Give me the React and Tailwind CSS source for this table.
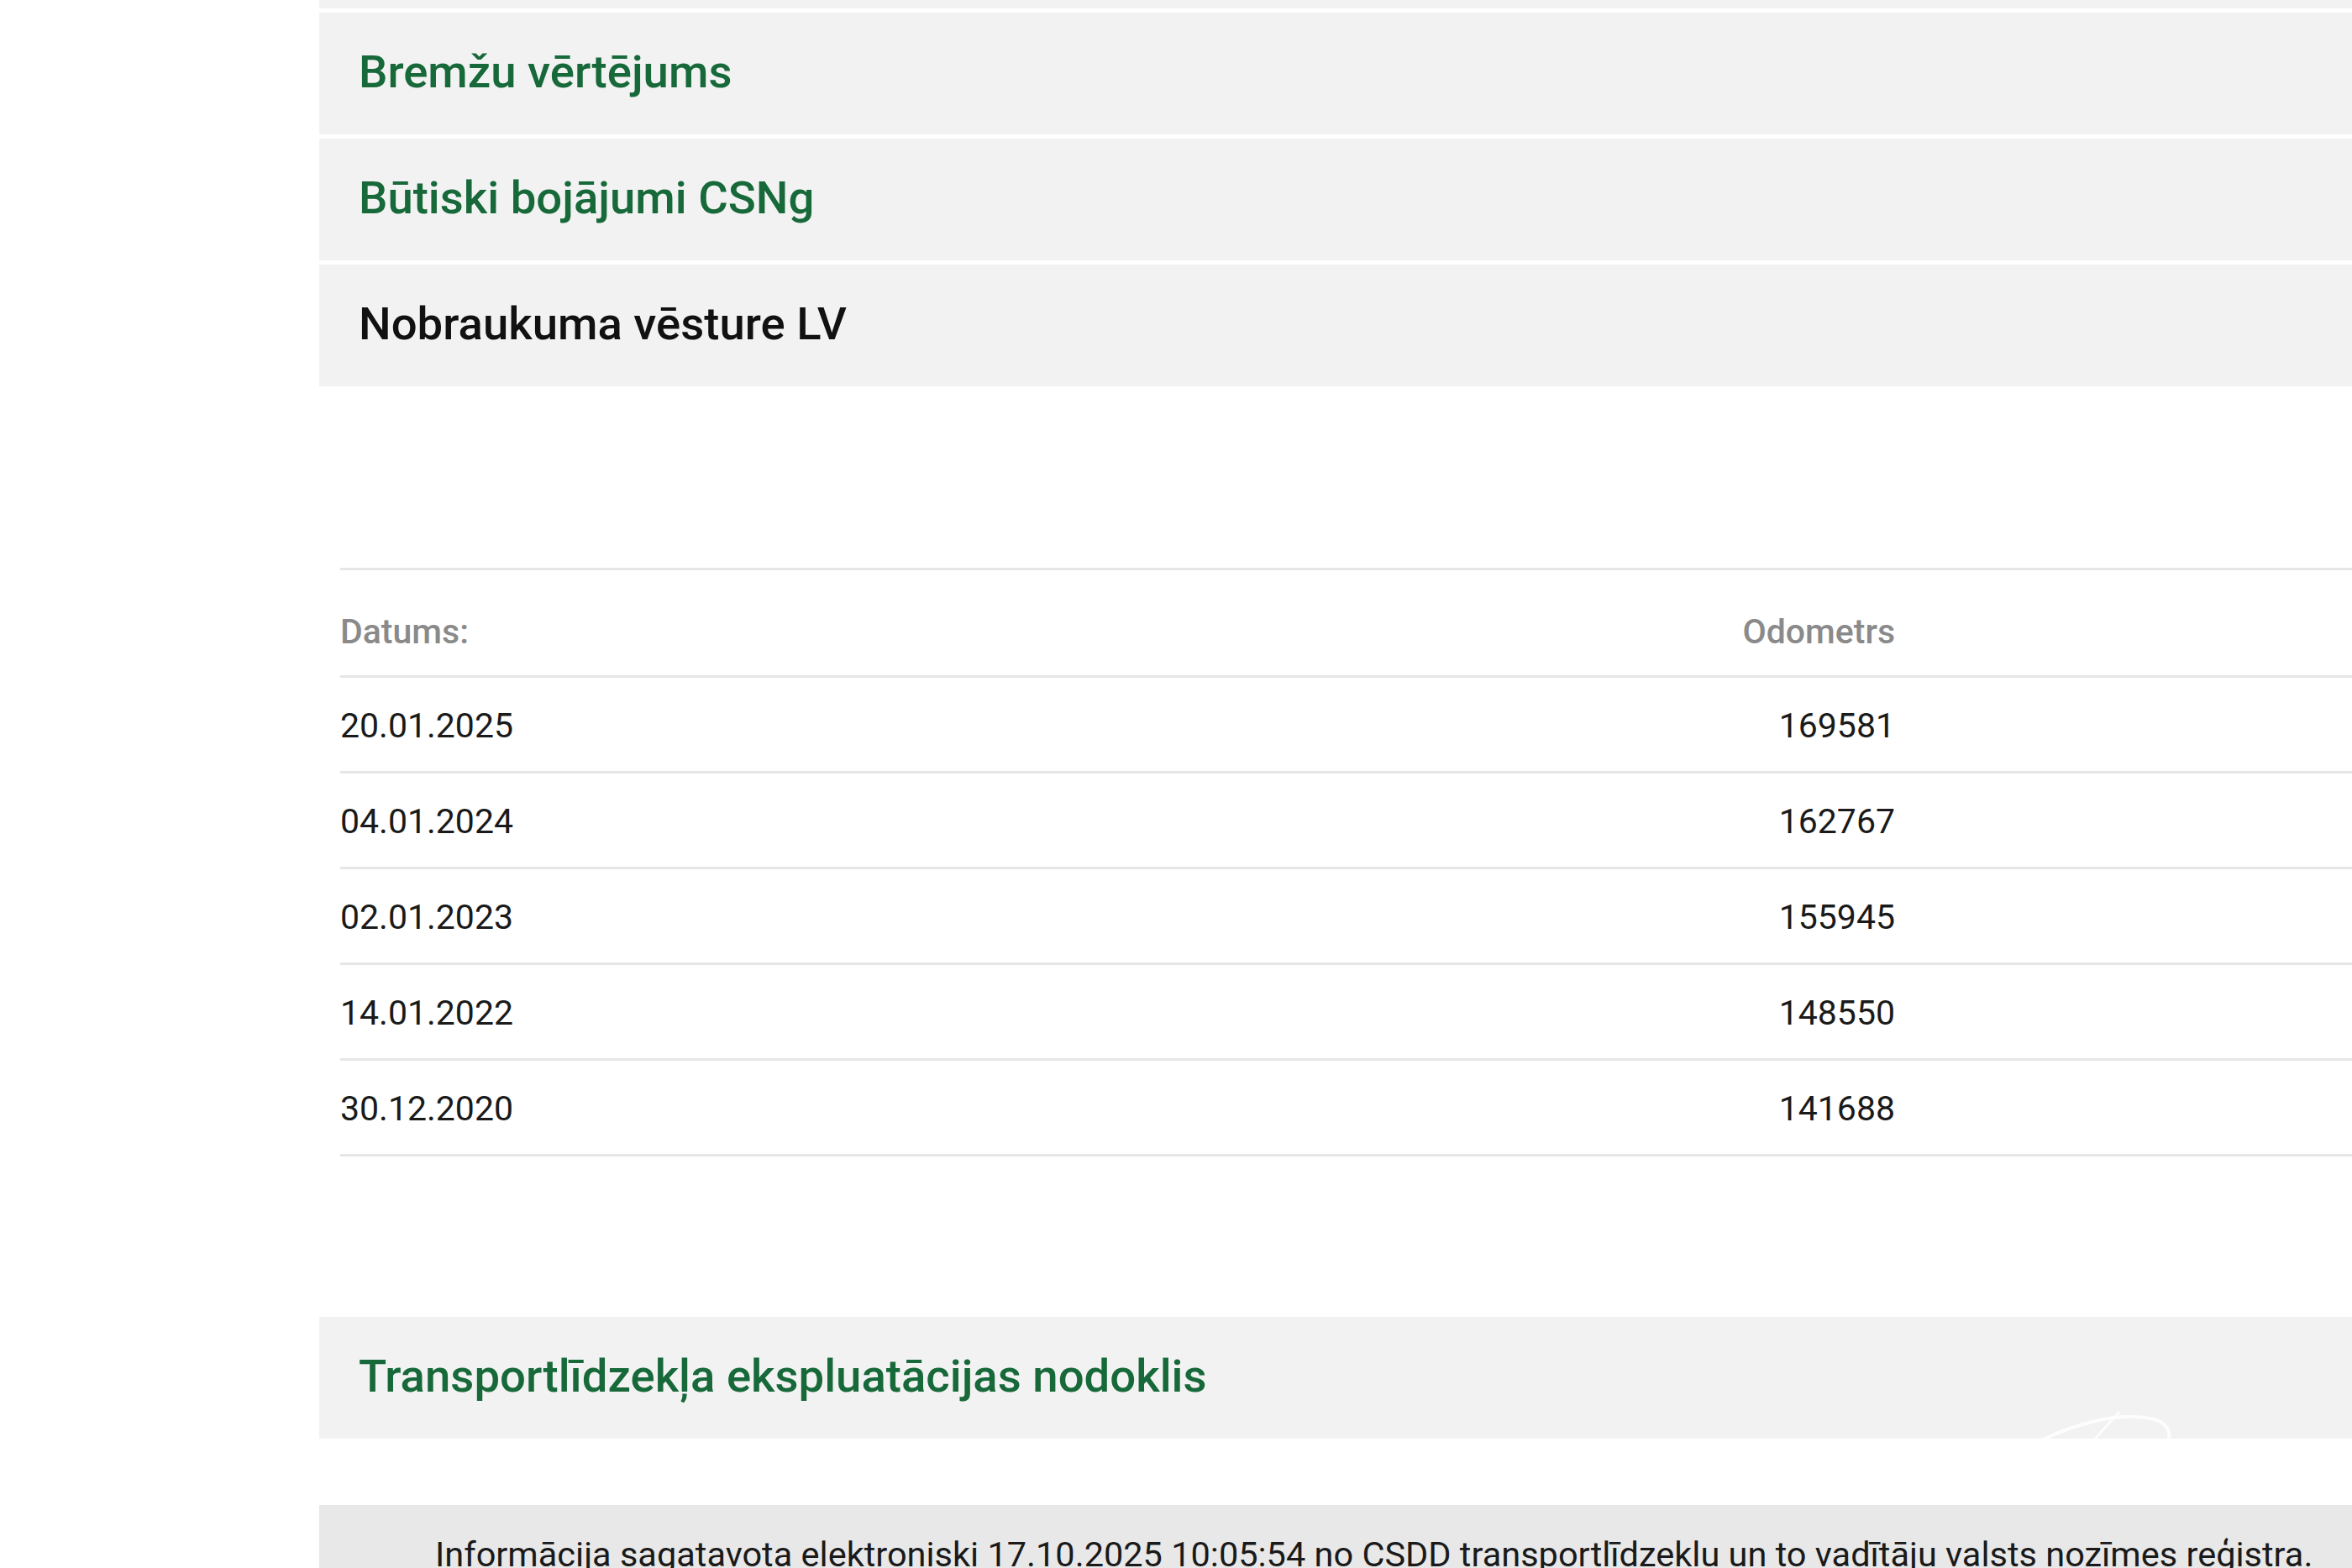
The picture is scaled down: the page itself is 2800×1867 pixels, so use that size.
import React from 'react';

const rows = [
  ['20.01.2025', '169581'],
  ['04.01.2024', '162767'],
  ['02.01.2023', '155945'],
  ['14.01.2022', '148550'],
  ['30.12.2020', '141688'],
];

function SectionBar({ title, active = false, children }) {
  return (
    <div className="relative flex h-[145px] items-center overflow-hidden bg-[#f2f2f2] pl-[47px]">
      <h3
        className={`pb-[4px] text-[54.5px] font-medium leading-none ${active ? 'text-[#111111]' : 'text-[#17693a]'}`}
      >
        {title}
      </h3>
      {children}
    </div>
  );
}

export default function App() {
  return (
    <div className="min-h-screen w-full overflow-hidden bg-white font-['Roboto','Liberation_Sans',sans-serif]">
      <div className="ml-[380px] flex flex-col">
        {/* Accordion headers */}
        <div className="flex flex-col gap-[5px]">
          <div className="h-[10px] bg-[#f2f2f2]" />
          <SectionBar title="Bremžu vērtējums" />
          <SectionBar title="Būtiski bojājumi CSNg" />
          <SectionBar title="Nobraukuma vēsture LV" active />
        </div>

        {/* Mileage table */}
        <div className="ml-[25px] mt-[216px] border-t-[3px] border-[#e6e6e6]">
          <div className="flex h-[128px] items-center border-b-[3px] border-[#e6e6e6] pt-[22px] text-[41px] font-medium text-[#8a8a8a]">
            <div className="flex w-[1851px] justify-between">
              <span>Datums:</span>
              <span>Odometrs</span>
            </div>
          </div>
          {rows.map(([date, km]) => (
            <div
              key={date}
              className="flex h-[114px] items-center border-b-[3px] border-[#e6e6e6] pt-[4px] text-[41px] text-[#1a1a1a]"
            >
              <div className="flex w-[1851px] justify-between">
                <span>{date}</span>
                <span>{km}</span>
              </div>
            </div>
          ))}
        </div>

        {/* Tax section */}
        <div className="mt-[191px]">
          <SectionBar title="Transportlīdzekļa ekspluatācijas nodoklis">
            <svg
              className="absolute left-[2025px] top-[107px] h-[80px] w-[180px]"
              viewBox="0 0 180 80"
              fill="none"
            >
              <path d="M10 48 C 60 20, 120 5, 160 15 C 175 20, 180 30, 176 40" stroke="#ffffff" strokeOpacity="0.8" strokeWidth="4" />
              <path d="M118 6 C 105 20, 92 35, 80 48" stroke="#ffffff" strokeOpacity="0.8" strokeWidth="3" />
            </svg>
          </SectionBar>
        </div>

        {/* Footer */}
        <div className="mt-[79px] h-[120px] bg-[#e8e8e8] pl-[138px] pt-[28px]">
          <p className="whitespace-nowrap text-[41.5px] leading-[1.5] text-[#1a1a1a]">
            Informācija sagatavota elektroniski 17.10.2025 10:05:54 no CSDD transportlīdzekļu un to vadītāju valsts nozīmes reģistra.
          </p>
        </div>
      </div>
    </div>
  );
}
